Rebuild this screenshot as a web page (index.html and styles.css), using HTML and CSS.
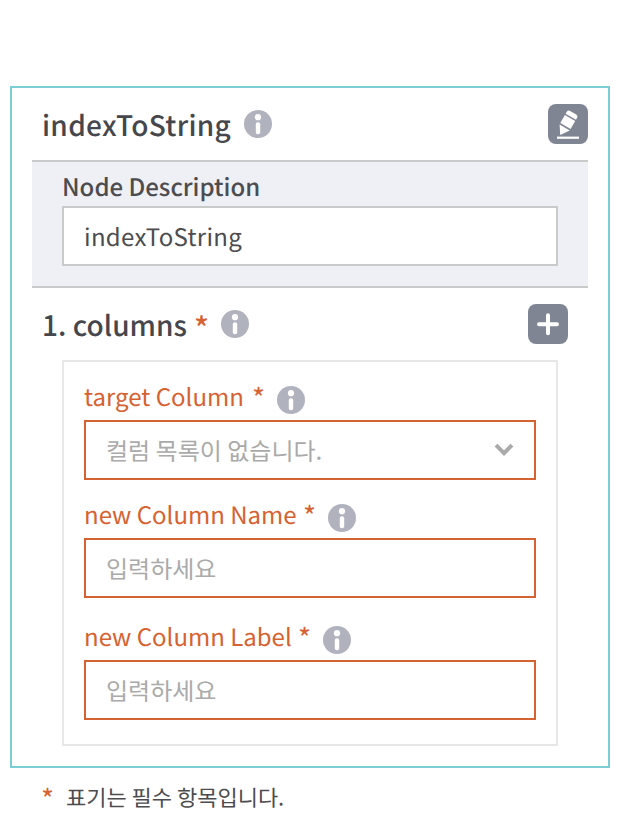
FILE: index.html
```html
<!DOCTYPE html>
<html lang="ko">
<head>
<meta charset="utf-8">
<title>indexToString</title>
<link rel="stylesheet" href="styles.css">
</head>
<body>
<svg class="defs" width="0" height="0">
  <symbol id="info" viewBox="0 0 28 28">
    <circle cx="14" cy="14" r="14" fill="#b0b2be"/>
    <circle cx="14" cy="7.2" r="3.1" fill="#fff"/>
    <rect x="11.8" y="12.2" width="4.4" height="12" rx="2" fill="#fff"/>
  </symbol>
</svg>
<main class="panel">
  <header class="panel-head">
    <h1 class="title title-name">indexToString</h1>
    <svg class="info"><use href="#info"/></svg>
    <button class="tool" aria-label="Edit">
      <svg width="40" height="40" viewBox="0 0 40 40" fill="#fff">
        <g transform="translate(12.2 31) rotate(30)">
          <path d="M0 0L-5.7-8.7H6Z"/>
          <path d="M-5.9-10.4H6V-19.6H-5.9Z"/>
          <path d="M-5.9-21.1H6V-23.4Q6-25.8 3.6-25.8H-3.5Q-5.9-25.8-5.9-23.4Z"/>
        </g>
        <path d="M9 32.6H31V34.8H9Z"/>
      </svg>
    </button>
  </header>
  <section class="description">
    <label class="description-label">Node Description</label>
    <div class="input input-filled"><span class="value">indexToString</span></div>
  </section>
  <div class="columns-head">
    <h2 class="title title-columns">1. columns</h2>
    <span class="star star-bold">*</span>
    <svg class="info"><use href="#info"/></svg>
    <button class="tool" aria-label="Add">
      <svg width="40" height="40" viewBox="0 0 40 40"><path d="M11 20.2H29M20 11.2V29.2" stroke="#fff" stroke-width="4" stroke-linecap="round"/></svg>
    </button>
  </div>
  <section class="group">
    <div class="field-label"><span class="label-text label-target">target Column</span><span class="star">*</span><svg class="info"><use href="#info"/></svg></div>
    <div class="input input-required"><span class="hint">컬럼 목록이 없습니다.</span>
      <svg class="chevron" width="20" height="14" viewBox="0 0 20 14"><path d="M2 2.2L10 10.2L18 2.2" fill="none" stroke="#aaa" stroke-width="4"/></svg>
    </div>
    <div class="field-label"><span class="label-text label-name">new Column Name</span><span class="star">*</span><svg class="info"><use href="#info"/></svg></div>
    <div class="input input-required"><span class="hint">입력하세요</span></div>
    <div class="field-label field-label-last"><span class="label-text label-label">new Column Label</span><span class="star">*</span><svg class="info"><use href="#info"/></svg></div>
    <div class="input input-required"><span class="hint">입력하세요</span></div>
  </section>
</main>
<footer class="note"><span class="star star-note">*</span><span class="note-text">표기는 필수 항목입니다.</span></footer>
</body>
</html>
```
FILE: styles.css
```css
* { box-sizing: border-box; }
body {
  margin: 0;
  padding: 86px 12px 0 10px;
  height: 824px;
  overflow: hidden;
  background: #fff;
  color: #4c4c50;
  font-family: "Noto Sans CJK KR", "Noto Sans", sans-serif;
  font-size: 24px;
  white-space: nowrap;
  word-spacing: -1.3px;
  text-rendering: geometricPrecision;
}
.defs { display: block; }
.panel {
  height: 682px;
  padding: 0 20px;
  border: 2px solid #7ccdd5;
}
.panel-head, .columns-head { display: flex; align-items: center; height: 72px; padding-left: 10px; }
.columns-head { padding-right: 20px; }
.title {
  margin: 0;
  padding-top: 2px;
  color: #46464d;
  font-size: 28px;
  font-weight: 500;
  line-height: 40px;
}
.title-name { width: 202px; letter-spacing: 0.3px; }
.title-columns { width: 152px; }
.info { display: block; flex: none; width: 28px; height: 28px; }
.tool {
  display: block;
  width: 40px;
  height: 40px;
  margin-left: auto;
  padding: 0;
  border: 0;
  border-radius: 8px;
  background: #808593;
}
.tool svg { display: block; }
.description {
  height: 128px;
  padding: 6px 30px 0;
  border: solid #c9cbcb;
  border-width: 2px 0;
  background: #eff0f5;
}
.description-label { display: block; height: 38px; font-weight: 500; line-height: 36px; }
.input { display: flex; align-items: center; height: 60px; padding: 0 20px; border: 2px solid #c9cbcb; background: #fff; line-height: 34px; }
.value { letter-spacing: 0.3px; }
.input-required { border-color: #d66232; color: #aaa; }
.chevron { margin-left: auto; }
.group { height: 386px; margin: 0 30px; padding: 0 20px; border: 2px solid #e7e7e7; }
.field-label { display: flex; height: 58px; padding-top: 16px; color: #d66232; line-height: 36px; }
.field-label-last { height: 62px; padding-top: 20px; }
.field-label .info { margin-top: 8px; }
.label-target { width: 168px; }
.label-name { width: 219px; }
.label-label { width: 214px; }
.star { width: 25px; padding-top: 2px; color: #d66232; font-size: 28px; font-weight: 400; }
.star-bold { width: 27px; padding-top: 4px; font-size: 31px; font-weight: 500; }
.note { display: flex; align-items: center; height: 56px; padding: 2px 0 0 31px; font-size: 22px; }
.star-note { padding-top: 4px; }
```
